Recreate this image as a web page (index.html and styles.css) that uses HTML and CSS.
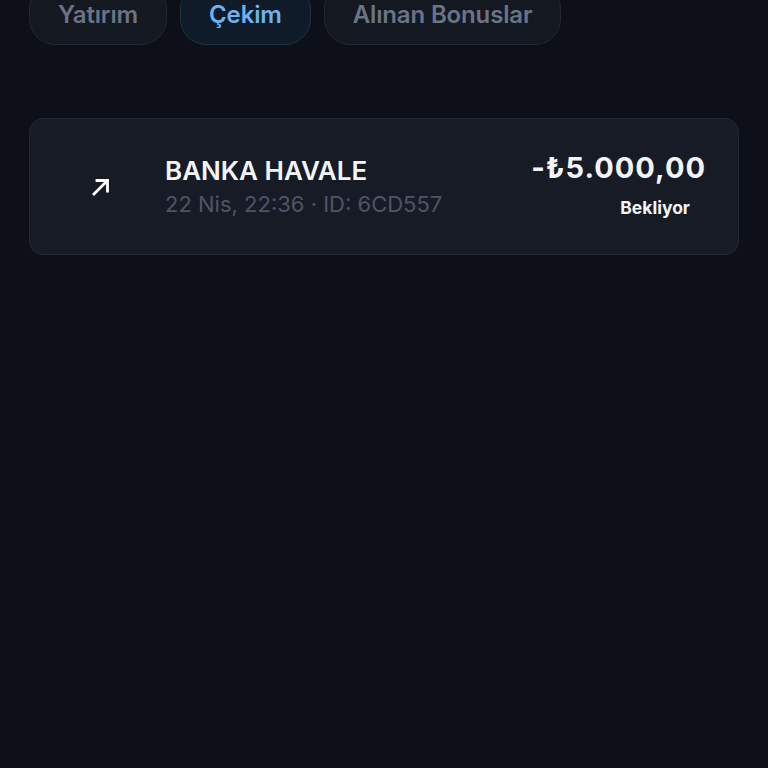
FILE: index.html
```html
<!DOCTYPE html>
<html lang="tr">
<head>
  <meta charset="UTF-8" />
  <meta name="viewport" content="width=device-width, initial-scale=1.0"/>
  <title>İşlem Geçmişi</title>
  <link rel="stylesheet" href="styles.css">
</head>
<body>

<div class="page">

  <nav class="tabs">
    <button class="tab">Yatırım</button>
    <button class="tab active">Çekim</button>
    <button class="tab">Alınan Bonuslar</button>
  </nav>

  <div class="list">
    <div class="tx">
      <div class="tx-icon">
        <svg width="24" height="24" viewBox="0 0 24 24" fill="none" stroke="currentColor" stroke-width="2.8" stroke-linecap="square">
          <path d="M5 19L17.5 6.5"/>
          <path d="M8 5.5h10.5V16"/>
        </svg>
      </div>
      <div class="tx-info">
        <div class="tx-title">BANKA HAVALE</div>
        <div class="tx-meta">22 Nis, 22:36 · ID: 6CD557</div>
      </div>
      <div class="tx-side">
        <div class="tx-amount">-₺5.000,00</div>
        <div class="tx-status">Bekliyor</div>
      </div>
    </div>
  </div>

</div>

</body>
</html>
```

FILE: styles.css
```css
:root {
  --bg: #0d1019;
  --card: #171b26;
  --border: #232836;
  --text: #f2f4f8;
  --muted: #4e5466;
  --tab-text: #6b7386;
  --accent: #6cb4f0;
}
* {
  box-sizing: border-box;
}
html, body {
  margin: 0;
  background: var(--bg);
  color: var(--text);
  font-family: Inter, 'Noto Sans', sans-serif;
  min-height: 100vh;
}
.page {
  padding: 0 29px;
}
.tabs {
  display: flex;
  gap: 13px;
  margin-top: -17px;
}
.tab {
  height: 62px;
  padding: 0 28px;
  border-radius: 26px;
  border: 1px solid #232733;
  background: #141821;
  color: var(--tab-text);
  font-family: inherit;
  font-size: 24px;
  font-weight: 600;
  letter-spacing: -0.15px;
}
.tab.active {
  background: #101b29;
  border-color: #1e3145;
  color: var(--accent);
}
.list {
  margin-top: 73px;
}
.tx {
  display: flex;
  align-items: center;
  height: 137px;
  padding: 0 32px 0 43px;
  background: var(--card);
  border: 1px solid var(--border);
  border-radius: 14px;
}
.tx-icon {
  width: 56px;
  height: 56px;
  display: flex;
  align-items: center;
  justify-content: center;
  color: #fff;
  flex-shrink: 0;
}
.tx-info {
  flex: 1;
  margin-left: 36px;
  margin-top: 1px;
}
.tx-title {
  font-size: 26px;
  font-weight: 600;
  letter-spacing: 0;
  line-height: 32px;
}
.tx-meta {
  margin-top: 2px;
  font-size: 22px;
  line-height: 30px;
  color: var(--muted);
}
.tx-side {
  display: flex;
  flex-direction: column;
  align-items: flex-end;
  margin-top: -4px;
}
.tx-amount {
  font-size: 29px;
  font-weight: 700;
  letter-spacing: 1px;
  line-height: 36px;
}
.tx-status {
  margin-top: 10px;
  padding: 0 16px;
  font-size: 17.5px;
  font-weight: 700;
  line-height: 24px;
}
```
